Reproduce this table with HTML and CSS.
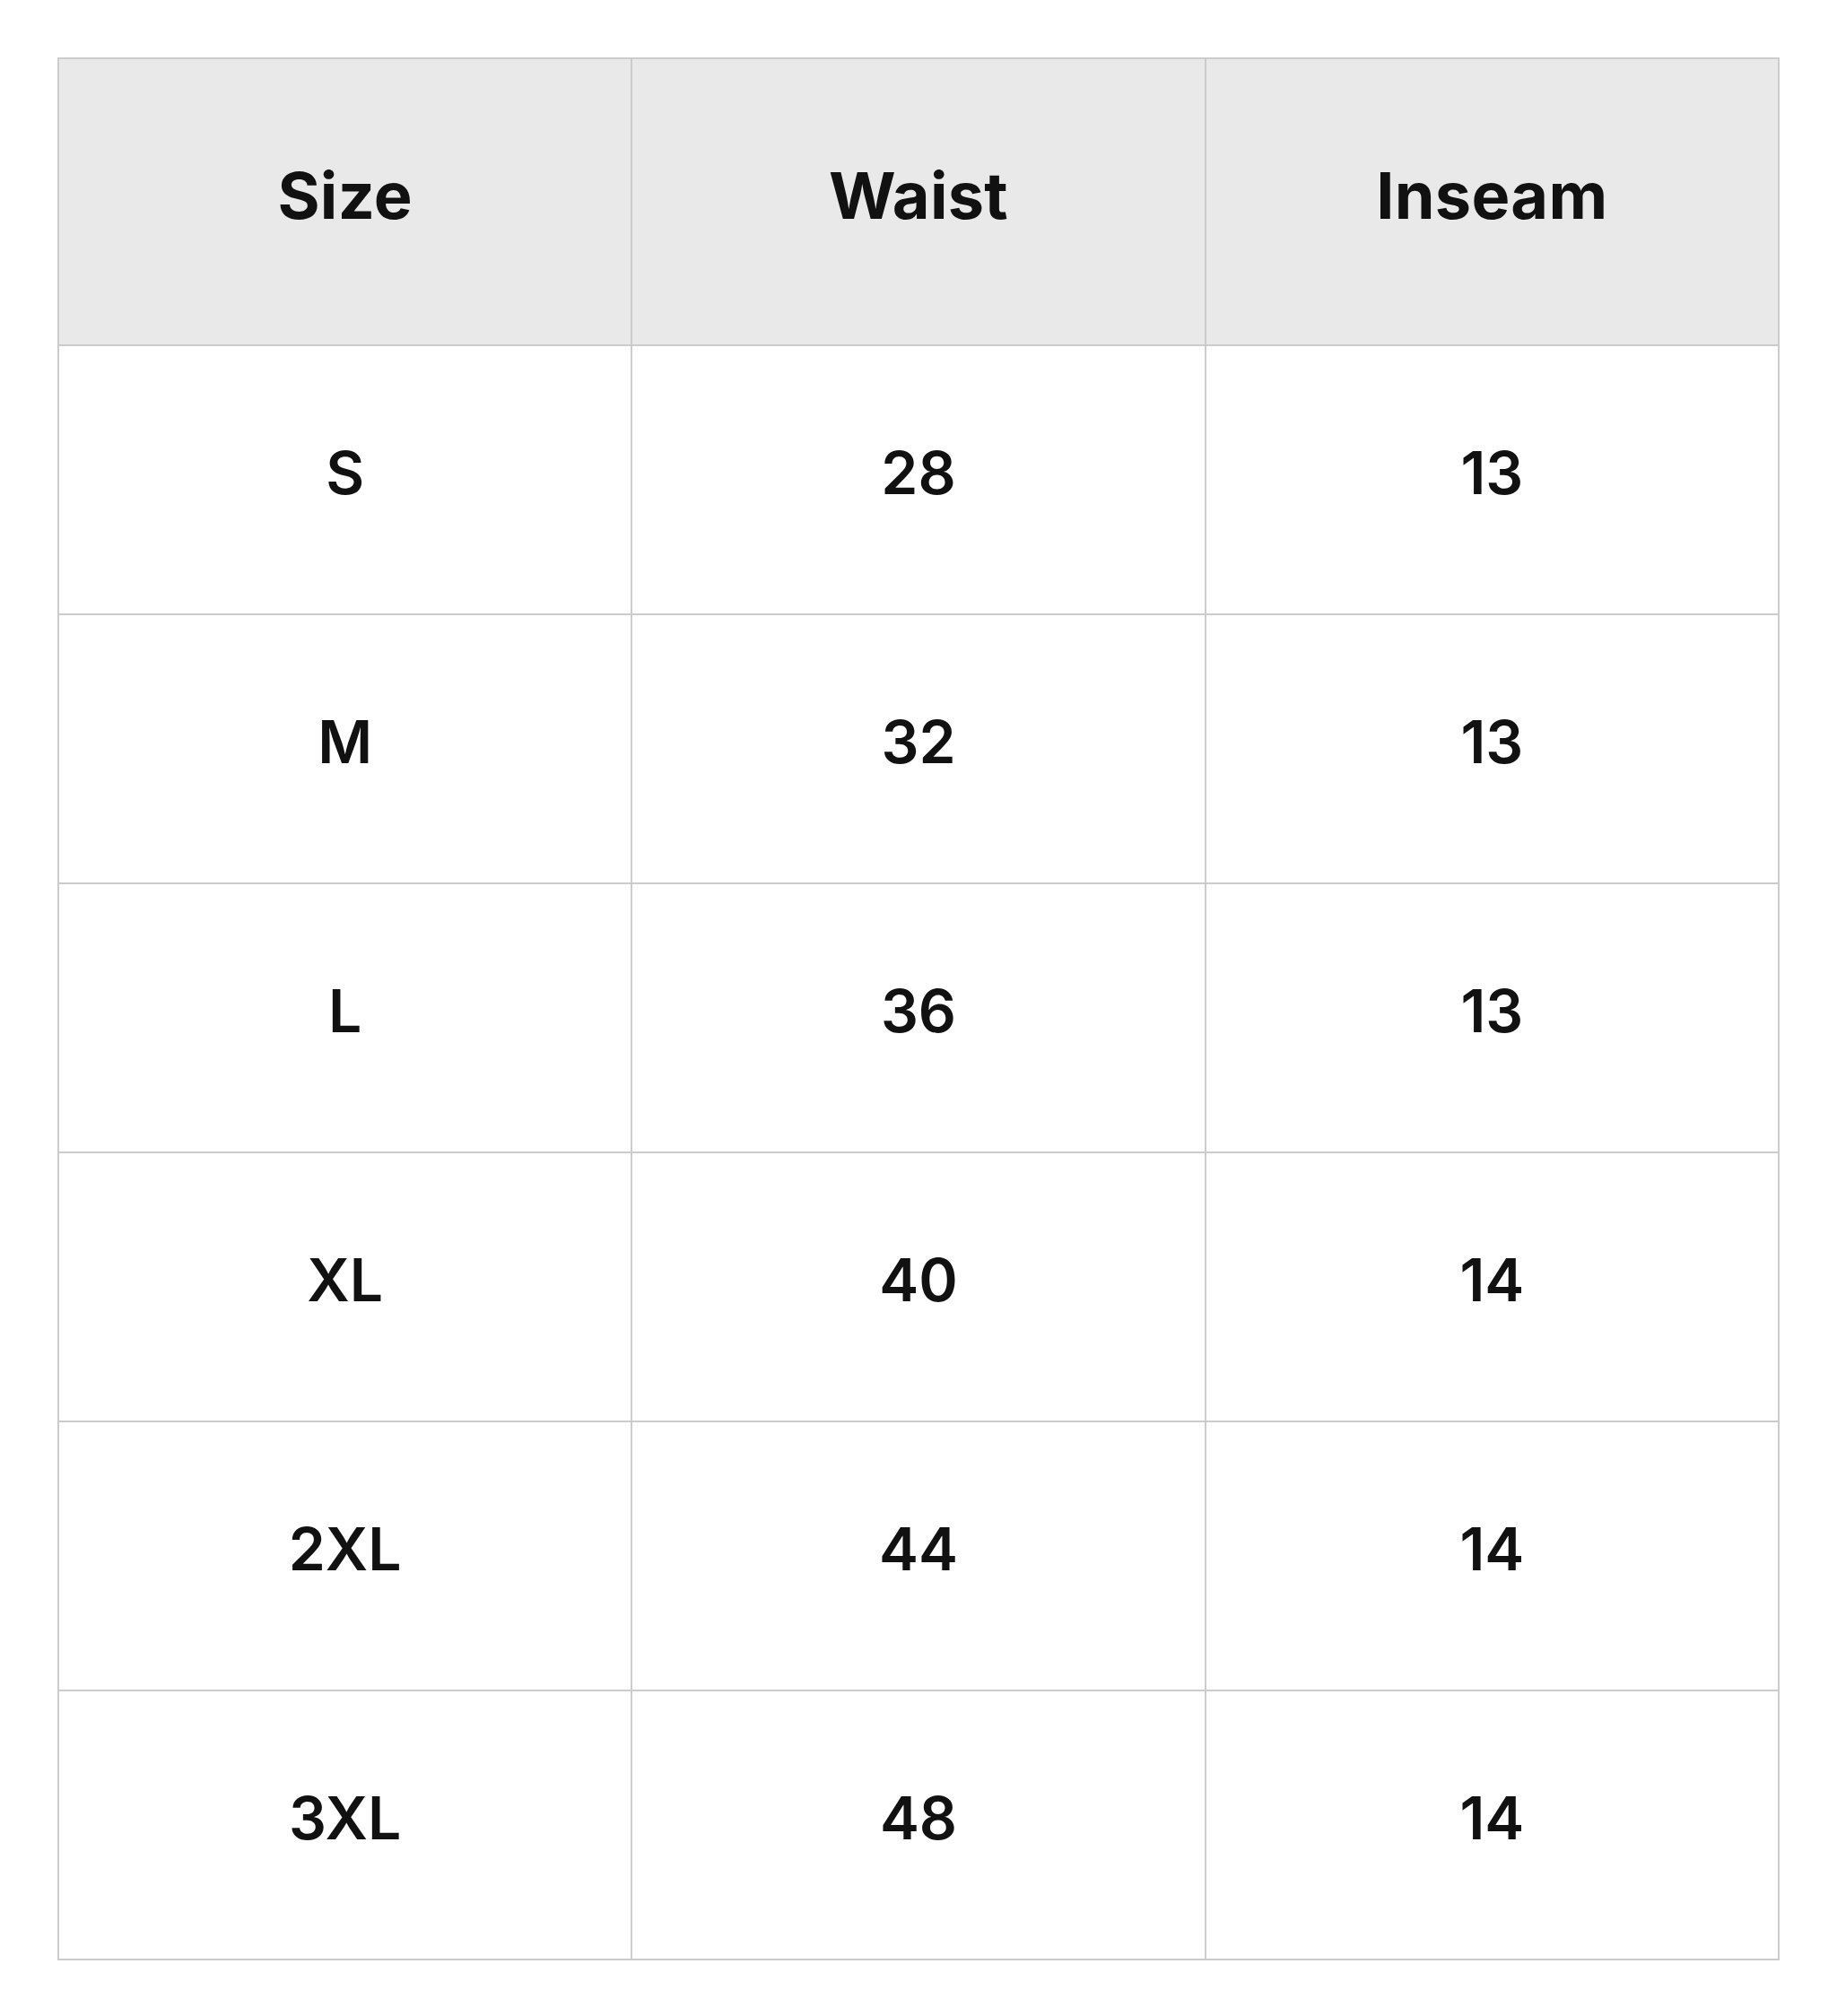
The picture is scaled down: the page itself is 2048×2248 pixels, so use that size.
FILE: index.html
```html
<!DOCTYPE html>
<html lang="en">
<head>
<meta charset="utf-8">
<title>Size chart</title>
<link rel="stylesheet" href="styles.css">
</head>
<body>
<main class="page">
  <table class="size-table">
    <thead>
      <tr class="head-row">
        <th>Size</th>
        <th>Waist</th>
        <th>Inseam</th>
      </tr>
    </thead>
    <tbody>
      <tr><td>S</td><td>28</td><td>13</td></tr>
      <tr><td>M</td><td>32</td><td>13</td></tr>
      <tr><td>L</td><td>36</td><td>13</td></tr>
      <tr><td>XL</td><td>40</td><td>14</td></tr>
      <tr><td>2XL</td><td>44</td><td>14</td></tr>
      <tr><td>3XL</td><td>48</td><td>14</td></tr>
    </tbody>
  </table>
</main>
</body>
</html>
```

FILE: styles.css
```css
html, body {
  margin: 0;
  padding: 0;
  background: #ffffff;
}

.page {
  padding: 64px;
  font-family: "Inter", "Liberation Sans", sans-serif;
  color: #111111;
}

.size-table {
  width: 1920px;
  table-layout: fixed;
  border-collapse: collapse;
  border: 2px solid #cccccc;
}

.size-table th,
.size-table td {
  border: 2px solid #cccccc;
  text-align: center;
  vertical-align: middle;
  padding: 0 0 16px 0;
}

.size-table th {
  background: #e9e9e9;
  height: 302px;
  font-size: 72px;
  font-weight: 700;
  letter-spacing: 0.3px;
}

.size-table td {
  height: 282px;
  font-size: 66px;
  font-weight: 600;
}
```
